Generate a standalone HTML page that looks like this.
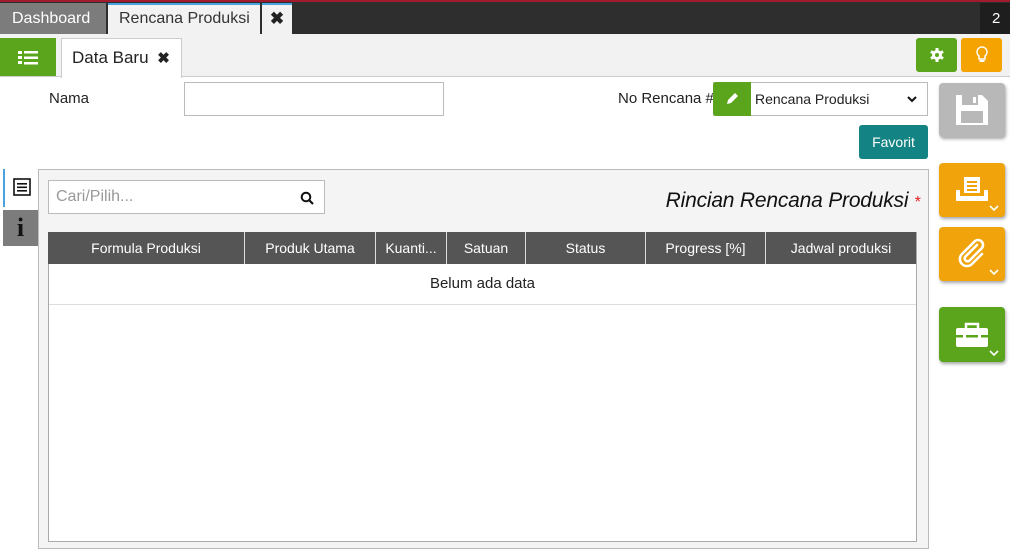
<!DOCTYPE html>
<html><head><meta charset="utf-8"><style>
*{box-sizing:border-box;margin:0;padding:0}
body{width:1010px;height:552px;background:#fff;position:relative;overflow:hidden;font-family:"Liberation Sans",sans-serif;font-size:14px;color:#222}
.a{position:absolute}
.th{position:absolute;top:0;height:32px;line-height:32px;text-align:center;color:#fff;font-size:14px;border-right:1px solid #ddd}
.sb{position:absolute;left:939px;width:66px;border-radius:4px;box-shadow:1px 2px 3px rgba(0,0,0,.35);display:flex;align-items:center;justify-content:center}
.chev{position:absolute;right:6px;bottom:5px}
</style></head><body>
<div class="a" style="left:0;top:0;width:1010px;height:34px;background:#2e2e2e;border-top:2px solid #a01c2c"></div>
<div class="a" style="left:0;top:3px;width:106px;height:31px;background:#7c7c7c;color:#fff;font-size:16px;line-height:31px;padding-left:12px">Dashboard</div>
<div class="a" style="left:108px;top:3px;width:152px;height:31px;background:#f2f2f2;border-top:2px solid #4aa3df;font-size:16px;line-height:28px;padding-left:11px;color:#333">Rencana Produksi</div>
<div class="a" style="left:262px;top:3px;width:30px;height:31px;background:#f2f2f2;border-top:2px solid #4aa3df;font-size:17px;line-height:28px;text-align:center;font-weight:bold">✖</div>
<div class="a" style="left:980px;top:3px;width:30px;height:31px;background:#1e1e1e;color:#fff;font-size:15px;line-height:31px;padding-left:12px">2</div>
<div class="a" style="left:0;top:34px;width:1010px;height:43px;background:#f2f2f2;border-bottom:1px solid #ccc"></div>
<div class="a" style="left:0;top:38px;width:56px;height:38px;background:#5aa51c">
<svg width="56" height="38"><g fill="#fff"><rect x="18" y="13" width="4" height="3"/><rect x="24" y="13" width="14" height="2.5"/><rect x="18" y="18" width="4" height="3"/><rect x="24" y="18.5" width="14" height="2.5"/><rect x="18" y="23" width="4" height="3"/><rect x="24" y="24" width="14" height="2.5"/></g></svg></div>
<div class="a" style="left:61px;top:38px;width:121px;height:40px;background:#fff;border:1px solid #ccc;border-bottom:none;font-size:17px;line-height:38px;padding-left:10px">Data Baru <b style="font-size:15px;margin-left:4px">✖</b></div>
<div class="a" style="left:916px;top:38px;width:41px;height:34px;background:#5aa51c;border-radius:3px;display:flex;align-items:center;justify-content:center">
<svg width="16" height="16" viewBox="0 0 16 16"><g fill="#fff"><circle cx="8" cy="8" r="5"/><rect x="6.5" y="1" width="3" height="14"/><rect x="6.5" y="1" width="3" height="14" transform="rotate(60 8 8)"/><rect x="6.5" y="1" width="3" height="14" transform="rotate(120 8 8)"/></g><circle cx="8" cy="8" r="2" fill="#5aa51c"/></svg></div>
<div class="a" style="left:961px;top:38px;width:41px;height:34px;background:#f5a300;border-radius:3px;display:flex;align-items:center;justify-content:center">
<svg width="14" height="18" viewBox="0 0 14 18"><path d="M7 1a5 5 0 0 0-3 9v3h6v-3a5 5 0 0 0-3-9z" fill="none" stroke="#fff" stroke-width="1.5"/><rect x="4.5" y="14" width="5" height="2" fill="#fff"/></svg></div>
<div class="a" style="left:49px;top:90px;font-size:15px">Nama</div>
<div class="a" style="left:184px;top:82px;width:260px;height:34px;border:1px solid #bbb;background:#fff"></div>
<div class="a" style="left:618px;top:90px;font-size:15px">No Rencana #</div>
<div class="a" style="left:713px;top:82px;width:215px;height:34px;border:1px solid #bbb;background:#fff;font-size:14px;line-height:32px;padding-left:41px">Rencana Produksi<svg style="position:absolute;right:10px;top:12px" width="10" height="8" viewBox="0 0 10 8"><path d="M1 2l4 4 4-4" fill="none" stroke="#111" stroke-width="2"/></svg></div>
<div class="a" style="left:713px;top:82px;width:38px;height:34px;background:#5aa51c;border-radius:3px 0 0 3px;display:flex;align-items:center;justify-content:center">
<svg width="16" height="16" viewBox="0 0 16 16"><path d="M3 13l1-4 7-7 3 3-7 7z" fill="#fff"/></svg></div>
<div class="a" style="left:859px;top:125px;width:69px;height:34px;background:#148383;border-radius:3px;color:#fff;font-size:14px;line-height:34px;text-align:center">Favorit</div>
<div class="sb" style="top:83px;height:54px;background:#b8b8b8">
<svg width="34" height="32" viewBox="0 0 34 32"><path d="M1 1h26l6 6v24H1z" fill="#fff"/><rect x="7" y="1" width="16" height="10" fill="#b8b8b8"/><rect x="18" y="3" width="3" height="6" fill="#fff"/><rect x="6" y="17" width="22" height="12" fill="#b8b8b8"/></svg></div>
<div class="sb" style="top:163px;height:54px;background:#f0a30a">
<svg width="34" height="28" viewBox="0 0 34 28"><rect x="9" y="1" width="16" height="16" fill="#fff"/><rect x="12" y="5" width="10" height="2" fill="#f0a30a"/><rect x="12" y="9" width="10" height="2" fill="#f0a30a"/><rect x="12" y="13" width="10" height="2" fill="#f0a30a"/><path d="M1 14h4v6h24v-6h4v11H1z" fill="#fff"/></svg><svg class="chev" width="10" height="7" viewBox="0 0 10 7"><path d="M1 1l4 4 4-4" fill="none" stroke="#fff" stroke-width="1.6"/></svg></div>
<div class="sb" style="top:227px;height:54px;background:#f0a30a">
<svg width="34" height="34" viewBox="0 0 34 34"><path d="M22 8L10 20a3 3 0 0 0 4 4l13-13a5 5 0 0 0-7-7L7 17a7 7 0 0 0 10 10l10-10" fill="none" stroke="#fff" stroke-width="2.6" stroke-linecap="round"/></svg><svg class="chev" width="10" height="7" viewBox="0 0 10 7"><path d="M1 1l4 4 4-4" fill="none" stroke="#fff" stroke-width="1.6"/></svg></div>
<div class="sb" style="top:307px;height:55px;background:#5aa51c">
<svg width="34" height="26" viewBox="0 0 34 26"><path d="M11 6V2h12v4" fill="none" stroke="#fff" stroke-width="2.5"/><rect x="1" y="6" width="32" height="19" rx="2" fill="#fff"/><rect x="1" y="13" width="32" height="2.5" fill="#5aa51c"/><rect x="8" y="11" width="3" height="7" fill="#fff"/><rect x="23" y="11" width="3" height="7" fill="#fff"/></svg><svg class="chev" width="10" height="7" viewBox="0 0 10 7"><path d="M1 1l4 4 4-4" fill="none" stroke="#fff" stroke-width="1.6"/></svg></div>
<div class="a" style="left:38px;top:169px;width:891px;height:380px;background:#f4f4f4;border:1px solid #bbb"></div>
<div class="a" style="left:3px;top:169px;width:35px;height:38px;background:#fff;border-left:2px solid #4aa3df;display:flex;justify-content:center;padding-top:9px">
<svg width="18" height="18" viewBox="0 0 18 18"><rect x="1" y="1" width="16" height="16" fill="none" stroke="#111" stroke-width="1.6"/><rect x="4" y="5" width="10" height="1.6" fill="#111"/><rect x="4" y="8.5" width="10" height="1.6" fill="#111"/><rect x="4" y="12" width="10" height="1.6" fill="#111"/></svg></div>
<div class="a" style="left:3px;top:210px;width:35px;height:36px;background:#7c7c7c;color:#111;font-family:'Liberation Serif',serif;font-weight:bold;font-size:26px;text-align:center;line-height:36px">i</div>
<div class="a" style="left:48px;top:180px;width:277px;height:34px;border:1px solid #bbb;background:#fff;color:#999;font-size:16px;line-height:32px;padding-left:7px">Cari/Pilih...
<svg class="a" style="right:10px;top:10px" width="14" height="14" viewBox="0 0 14 14"><circle cx="6" cy="6" r="4.3" fill="none" stroke="#111" stroke-width="2"/><path d="M9 9l4 4" stroke="#111" stroke-width="2.2"/></svg></div>
<div class="a" style="right:90px;top:189px;font-size:21px;font-style:italic;color:#111;letter-spacing:-.2px">Rincian Rencana Produksi <span style="color:#e02020;font-size:16px">*</span></div>
<div class="a" style="left:48px;top:232px;width:869px;height:310px;background:#fff;border:1px solid #aaa;border-top:none"></div>
<div class="a" style="left:48px;top:232px;width:868px;height:32px;background:#555">
<div class="th" style="left:0;width:197px">Formula Produksi</div>
<div class="th" style="left:197px;width:131px">Produk Utama</div>
<div class="th" style="left:328px;width:71px">Kuanti...</div>
<div class="th" style="left:399px;width:79px">Satuan</div>
<div class="th" style="left:478px;width:120px">Status</div>
<div class="th" style="left:598px;width:120px">Progress [%]</div>
<div class="th" style="left:718px;width:150px;border-right:none">Jadwal produksi</div>
</div>
<div class="a" style="left:49px;top:264px;width:867px;height:41px;border-bottom:1px solid #ddd;text-align:center;line-height:40px;font-size:15px">Belum ada data</div>
</body></html>
